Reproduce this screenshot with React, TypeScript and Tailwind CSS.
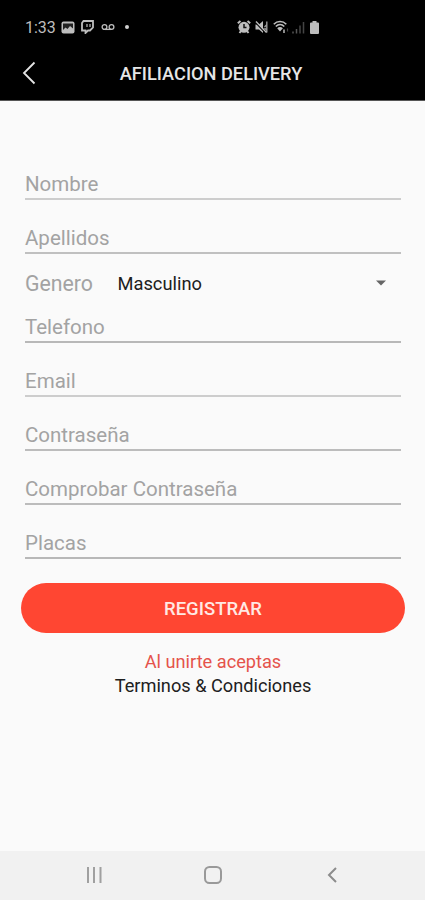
import type { ReactNode } from "react";

function Field({ label, className }: { label: string; className: string }) {
  return (
    <div className={`mr-[24px] ml-[25px] flex items-end border-b-2 ${className}`}>
      <span className="pb-[4px] text-[20.5px] leading-5 text-[#a3a3a3] whitespace-nowrap">{label}</span>
    </div>
  );
}

function Icon({ w, h, className, children }: { w: number; h: number; className?: string; children: ReactNode }) {
  return (
    <svg width={w} height={h} viewBox={`0 0 ${w} ${h}`} fill="none" className={`shrink-0 ${className ?? ""}`}>
      {children}
    </svg>
  );
}

function StatusBar() {
  return (
    <div className="flex h-[54px] items-center pl-[25px] text-[#bdbdbd]">
      <span className="w-[36px] pt-px text-[16px] leading-5 whitespace-nowrap">1:33</span>
      <Icon w={14} h={13}>
        <rect x="0.5" y="0.5" width="13" height="12" rx="2" fill="currentColor" />
        <path d="M2 2.5h10v5L9 5 6.5 8 4.5 6.5 2 9z" fill="#222" />
      </Icon>
      <Icon w={13} h={14} className="ml-[6px]">
        <path d="M2.5 1H12v6.5L9 10.5H7L4.5 13v-2.5H1V3z" stroke="currentColor" strokeWidth="1.8" />
        <path d="M6 4v3M9 4v3" stroke="currentColor" strokeWidth="1.2" />
      </Icon>
      <Icon w={14} h={8} className="ml-[7px]">
        <circle cx="3.5" cy="4" r="2.4" stroke="currentColor" strokeWidth="1.3" />
        <circle cx="10.5" cy="4" r="2.4" stroke="currentColor" strokeWidth="1.3" />
        <path d="M3.5 6.4h7" stroke="currentColor" strokeWidth="1.3" />
      </Icon>
      <span className="ml-[10px] size-1 rounded-full bg-[#d0d0d0]" />
      <Icon w={14} h={14} className="ml-[108px]">
        <circle cx="7" cy="7.3" r="5.5" fill="currentColor" />
        <path d="M.8 3.2L3.5 1M13.2 3.2L10.5 1M2.5 13l1.5-2M11.5 13L10 11" stroke="currentColor" strokeWidth="2" />
        <path d="M7 4v3.6h2.5" stroke="#111" strokeWidth="1.5" />
      </Icon>
      <Icon w={14} h={14} className="ml-[4px]">
        <path d="M0.5 4.5h3.5L8 1v12L4 9.5H0.5z" fill="currentColor" />
        <path d="M9.5 7L11.5 5M9.5 8l2 2M11.8 1.5v11" stroke="#999" strokeWidth="1.4" />
        <path d="M0.5 2.5l10 10.5" stroke="#000" strokeWidth="1.2" />
        <path d="M1 1.5l10.5 11" stroke="currentColor" strokeWidth="1.3" />
      </Icon>
      <Icon w={16} h={14} className="ml-[4px]">
        <path d="M.8 4.2c3.5-3.6 9-3.6 12.5 0" stroke="currentColor" strokeWidth="1.6" />
        <path d="M2.8 6.5c2.5-2.5 6-2.5 8.5 0" stroke="currentColor" strokeWidth="1.6" />
        <path d="M4.2 8.2c1.7-1.6 4-1.6 5.7 0L7 11.5z" fill="currentColor" />
        <path d="M11 9.5v3.5" stroke="#999" strokeWidth="1.8" />
        <path d="M14.5 8.5v3" stroke="#444" strokeWidth="1.2" />
      </Icon>
      <Icon w={13} h={13} className="ml-[3px]">
        <path d="M1 10.5v2M4.5 8v4.5" stroke="#555" strokeWidth="1.5" />
        <path d="M8 4.5v8M11.5 1v11.5" stroke="#444" strokeWidth="1.5" />
      </Icon>
      <Icon w={9} h={13} className="ml-[5px]">
        <path d="M2.5 0h4v1.5H8q1 0 1 1V12q0 1-1 1H1q-1 0-1-1V2.5q0-1 1-1h1.5z" fill="currentColor" />
      </Icon>
    </div>
  );
}

export default function App() {
  return (
    <div className="flex h-[900px] w-[425px] flex-col overflow-hidden bg-[#fafafa] font-['Roboto',sans-serif]">
      <header className="h-[101px] shrink-0 border-b border-[#555] bg-black">
        <StatusBar />
        <div className="grid h-[38px] grid-cols-[110px_202px_113px] items-center">
          <Icon w={14} h={24} className="ml-[22px]">
            <path d="M12.5 1.5L2 12l10.5 10.5" stroke="#e5e5e5" strokeWidth="1.8" />
          </Icon>
          <h1 className="pt-px text-center text-[18.2px] leading-6 font-medium whitespace-nowrap text-[#e6e6e6]">AFILIACION DELIVERY</h1>
        </div>
      </header>

      <main className="flex flex-1 flex-col">
        <Field label="Nombre" className="h-[99px] border-[#cdcdcd]" />
        <Field label="Apellidos" className="h-[54px] border-[#c0c0c0]" />
        <div className="mr-[24px] ml-[25px] flex h-[58px] items-center">
          <span className="w-[92.5px] pt-px text-[21.3px] leading-6 text-[#a3a3a3]">Genero</span>
          <span className="pt-[2px] text-[18.3px] leading-6 text-[#202020]">Masculino</span>
          <Icon w={10} h={6} className="mr-[15px] ml-auto">
            <path d="M0 0.5h10L5 5.5z" fill="#666" />
          </Icon>
        </div>
        <Field label="Telefono" className="h-[31px] border-[#b8b8b8]" />
        <Field label="Email" className="h-[54px] border-[#cdcdcd]" />
        <Field label="Contraseña" className="h-[54px] border-[#bcbcbc]" />
        <Field label="Comprobar Contraseña" className="h-[54px] border-[#bcbcbc]" />
        <Field label="Placas" className="h-[54px] border-[#b8b8b8]" />
        <button className="mt-[24px] mr-[20px] ml-[21px] h-[50px] rounded-full bg-[#ff4632] pt-[3px] text-[18.5px] font-medium text-[#ffe9e4]">
          REGISTRAR
        </button>
        <p className="mt-[17px] pl-px text-center text-[18.2px] leading-6 text-[#e5534b]">Al unirte aceptas</p>
        <p className="pl-px text-center text-[18.2px] leading-6 text-[#202020]">Terminos &amp; Condiciones</p>
      </main>

      <nav className="flex h-[49px] shrink-0 items-center bg-[#f1f1f1] pb-[2px]">
        <Icon w={18} h={16} className="ml-[85px]">
          <path d="M3 0v16M9 0v16M15.5 0v16" stroke="#a0a0a0" strokeWidth="2" />
        </Icon>
        <Icon w={18} h={18} className="ml-[101px]">
          <rect x="1" y="1" width="16" height="16" rx="4.5" stroke="#999" strokeWidth="2" />
        </Icon>
        <Icon w={10} h={16} className="ml-[105px]">
          <path d="M9 1L2 8l7 7" stroke="#8c8c8c" strokeWidth="2" />
        </Icon>
      </nav>
    </div>
  );
}
